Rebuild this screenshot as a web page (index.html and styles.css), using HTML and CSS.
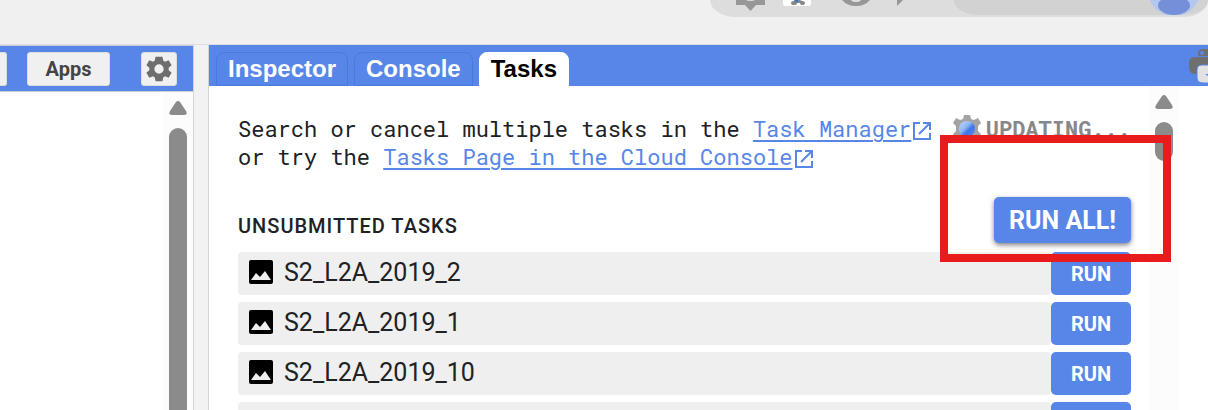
FILE: index.html
```
<!DOCTYPE html>
<html lang="en">
<head>
    <meta charset="UTF-8">
    <meta name="viewport" content="width=device-width, initial-scale=1.0">
    <title>Tasks</title>
    <link rel="stylesheet" href="styles.css">
</head>
<body>
    <header class="topbar">
        <div class="toolbar">
            <svg class="toolbar-icons" width="200" height="17" viewBox="0 0 200 17" aria-hidden="true">
                <path fill="#979797" d="M26 0h29v5h-9l-5.500 6l-5.500-6h-9z"/>
                <ellipse cx="40.500" cy="-1" rx="5" ry="2" fill="#ddd"/>
                <path fill="#fff" d="M73 0h28v3q0 3-3 3H76q-3 0-3-3z"/>
                <path fill="#888" d="M81 3q0-2 3-2l2-1h4l2 1q3 0 3 2t-3 2q-2 0-2-2h-3q0 2-3 2t-3-2z"/>
                <path fill="#3a78c4" d="M84 0h4v2h-3z"/>
                <path fill="#979797" d="M132 0q5 6 14 6t14-6h-9q-1 2-5 2t-5-2z"/>
                <path fill="#979797" d="M187 0h6l-6 6z"/>
            </svg>
            <div class="account">
                <svg width="48" height="15" viewBox="0 0 48 15" aria-hidden="true">
                    <path fill="#b3c7f0" d="M0 0h48a25 22 0 0 1-48 0z"/>
                    <path fill="#7590d8" d="M8 6q0-4 3-6h26q3 2 3 6c0 4-7 9-16 9S8 10 8 6z"/>
                </svg>
            </div>
        </div>
    </header>

    <main class="workspace">
        <section class="editor">
            <div class="editor-bar">
                <button class="button cut" aria-label="Reset"></button>
                <button class="button apps">Apps</button>
                <button class="button settings" aria-label="Settings">
                    <svg width="28" height="28" viewBox="0 0 24 24"><path fill="#6e6e6e" fill-rule="evenodd" d="M9 1.500h6l.6 3.300 1.600.9 3.100-1.200 2.500 4.300-2.500 2.200v2l2.500 2.200-2.500 4.300-3.100-1.200-1.600.9-.6 3.300H9l-.6-3.300-1.600-.9-3.100 1.200-2.500-4.300L3.700 13v-2L1.200 8.800l2.500-4.300 3.100 1.200 1.600-.9zM12 8a4 4 0 1 0 0 8 4 4 0 0 0 0-8z"/></svg>
                </button>
            </div>
            <div class="editor-body">
                <div class="scrollbar">
                    <svg width="18" height="14" viewBox="0 0 18 14" aria-hidden="true"><path fill="#8b8b8b" d="M7 1q2-2 4 0l6 9q2 4-2 4H3q-4 0-2-4z"/></svg>
                    <div class="thumb thumb-long"></div>
                </div>
            </div>
        </section>

        <div class="splitter"></div>

        <section class="panel">
            <nav class="tabs">
                <button class="tab">Inspector</button>
                <button class="tab">Console</button>
                <button class="tab active">Tasks</button>
                <svg class="python" width="19" height="34" viewBox="0 0 19 34" aria-hidden="true">
                    <path fill="#6f6f6f" d="M9 7V4q0-4 6-4h4v7z"/>
                    <path fill="#6f6f6f" d="M6 8h13v17H6q-6 0-6-7v-4q0-6 6-6z"/>
                    <circle cx="13" cy="4" r="2" fill="#5886e8"/>
                    <path fill="#e2e2e2" stroke="#5886e8" d="M8 21q0-5 5-5h7v18h-5q-7 0-7-5z"/>
                    <path fill="#5886e8" d="M16 25h3v2z"/>
                </svg>
            </nav>
            <div class="panel-body">
                <div class="tasks">
                    <div class="intro">
                        <p>Search or cancel multiple tasks in the <a href="#manager">Task Manager</a><svg class="open" width="18" height="18" viewBox="0 0 18 18" aria-hidden="true"><path fill="none" stroke="#5886e8" stroke-width="2" d="M7 1H1v16h16v-6M10 1h7v7M17 1L6 12"/></svg><br>or try the <a href="#cloud">Tasks Page in the Cloud Console</a><svg class="open" width="18" height="18" viewBox="0 0 18 18" aria-hidden="true"><path fill="none" stroke="#5886e8" stroke-width="2" d="M7 1H1v16h16v-6M10 1h7v7M17 1L6 12"/></svg></p>
                        <div class="updating">
                            <svg width="30" height="30" viewBox="0 0 30 30" aria-hidden="true">
                                <defs>
                                    <linearGradient id="ball" x1="0" y1="0" x2="1" y2="1">
                                        <stop offset="0" stop-color="#c4dafa"/>
                                        <stop offset="0.400" stop-color="#8fb6f5"/>
                                        <stop offset="0.600" stop-color="#3f74e4"/>
                                        <stop offset="1" stop-color="#5b93f0"/>
                                    </linearGradient>
                                </defs>
                                <path fill="#a3a3a3" d="M12 1h6l1 4 3 1 4-2 3 5-3 3v5l3 3-3 5-4-1-3 2-1 3h-6l-1-3-3-2-4 1-3-5 3-3v-5L1 9l3-5 4 2 3-1z"/>
                                <circle cx="15" cy="15" r="8" fill="url(#ball)"/>
                            </svg>
                            <span>UPDATING...</span>
                        </div>
                    </div>

                    <div class="heading">
                        <h2>UNSUBMITTED TASKS</h2>
                        <button class="run-all">RUN ALL!</button>
                    </div>

                    <ul class="task-list">
                        <li class="task">
                            <div class="name"><svg width="26" height="26" viewBox="0 0 26 26" aria-hidden="true"><rect x="1" y="1" width="24" height="24" rx="2"/><path fill="#efefef" d="M3 21l5-7 4 4 5-6 6 9z"/></svg>S2_L2A_2019_2</div>
                            <button class="run">RUN</button>
                        </li>
                        <li class="task">
                            <div class="name"><svg width="26" height="26" viewBox="0 0 26 26" aria-hidden="true"><rect x="1" y="1" width="24" height="24" rx="2"/><path fill="#efefef" d="M3 21l5-7 4 4 5-6 6 9z"/></svg>S2_L2A_2019_1</div>
                            <button class="run">RUN</button>
                        </li>
                        <li class="task">
                            <div class="name"><svg width="26" height="26" viewBox="0 0 26 26" aria-hidden="true"><rect x="1" y="1" width="24" height="24" rx="2"/><path fill="#efefef" d="M3 21l5-7 4 4 5-6 6 9z"/></svg>S2_L2A_2019_10</div>
                            <button class="run">RUN</button>
                        </li>
                        <li class="task">
                            <div class="name"></div>
                            <button class="run" aria-label="Run"></button>
                        </li>
                    </ul>
                    <div class="highlight"></div>
                </div>
                <div class="scrollbar">
                    <svg width="18" height="14" viewBox="0 0 18 14" aria-hidden="true"><path fill="#8b8b8b" d="M7 1q2-2 4 0l6 9q2 4-2 4H3q-4 0-2-4z"/></svg>
                    <div class="thumb"></div>
                </div>
            </div>
        </section>
    </main>
</body>
</html>
```
FILE: styles.css
```
* {
    box-sizing: border-box;
}
body {
    display: flex;
    flex-direction: column;
    margin: 0;
    height: 100vh;
    overflow: hidden;
    background: #fff;
    font-family: Roboto, sans-serif;
    color: #202124;
}
svg {
    display: block;
    flex: none;
}
button {
    border: none;
    padding: 0;
    font-family: inherit;
    font-weight: bold;
    cursor: pointer;
}

/* top strip */
.topbar {
    flex: none;
    display: flex;
    justify-content: flex-end;
    align-items: flex-start;
    height: 45px;
    background: #f0f0f0;
    border-bottom: 1px solid #dedede;
}
.toolbar {
    display: flex;
    justify-content: space-between;
    width: 498px;
    height: 17px;
    background: #ddd;
    border-radius: 0 0 24px 26px / 0 0 17px 17px;
}
.account {
    display: flex;
    justify-content: flex-end;
    width: 254px;
    height: 15px;
    padding-right: 10px;
    background: #d2d2d2;
    border-radius: 0 0 24px 24px / 0 0 15px 15px;
}

.workspace {
    flex: 1;
    display: flex;
    min-height: 0;
}

/* left pane */
.editor {
    flex: none;
    display: flex;
    flex-direction: column;
    width: 193px;
}
.editor-bar {
    flex: none;
    display: flex;
    align-items: center;
    height: 47px;
    background: #5886e8;
    border-top: 1px solid #c8d0e0;
    border-bottom: 1px solid #d0d0d0;
}
.button {
    height: 34px;
    background: #f0f0f0;
    border: 1px solid #ddd;
    border-radius: 3px;
    color: #444;
    font-size: 20px;
    font-weight: bold;
}
.cut {
    width: 7px;
    border-left: none;
    border-radius: 0 3px 3px 0;
}
.apps {
    width: 83px;
    margin-left: 20px;
}
.settings {
    display: flex;
    align-items: center;
    justify-content: center;
    width: 36px;
    margin-left: 31px;
}
.editor-body {
    flex: 1;
    display: flex;
    justify-content: flex-end;
}

.scrollbar {
    flex: none;
    display: flex;
    flex-direction: column;
    align-items: center;
    gap: 13px;
    width: 30px;
    padding-top: 9px;
    background: #fcfcfc;
}
.thumb {
    width: 18px;
    height: 39px;
    background: #8b8b8b;
    border-radius: 9px;
}
.thumb-long {
    flex: 1;
    border-radius: 9px 9px 0 0;
}

.splitter {
    flex: none;
    width: 16px;
    background: #f2f2f2;
    border-left: 1px solid #d4d4d4;
    border-right: 1px solid #d4d4d4;
}

/* right pane */
.panel {
    flex: 1;
    display: flex;
    flex-direction: column;
    min-width: 0;
}
.tabs {
    flex: none;
    display: flex;
    align-items: flex-end;
    gap: 6px;
    height: 41px;
    padding-left: 7px;
    background: #5886e8;
}
.tab {
    height: 34px;
    padding: 0 11px;
    background: #5886e8;
    border: 1px solid #4a78e2;
    border-radius: 8px 8px 0 0;
    color: #fff;
    font-family: "Liberation Sans", Arial, sans-serif;
    font-size: 24px;
}
.tab.active {
    background: #fff;
    border-color: #fff;
    color: #000;
}
.python {
    align-self: center;
    margin-left: auto;
}
.panel-body {
    flex: 1;
    display: flex;
    min-height: 0;
    padding-right: 29px;
    overflow: hidden;
}
.tasks {
    position: relative;
    flex: 1;
    min-width: 0;
    padding: 29px 18px 0 29px;
}
.intro {
    display: flex;
    justify-content: space-between;
    font-family: "Roboto Mono", "Liberation Mono", monospace;
    font-size: 22px;
    line-height: 28px;
    white-space: nowrap;
}
.intro p {
    margin: 0;
}
.intro a {
    color: #5886e8;
    text-decoration-thickness: 2px;
    text-underline-offset: 3px;
}
.open {
    display: inline-block;
    margin-left: 2px;
    vertical-align: -3px;
}
.updating {
    display: flex;
    align-items: center;
    gap: 4px;
    height: 28px;
    color: #878787;
    font-weight: bold;
}

.heading {
    display: flex;
    align-items: center;
    justify-content: space-between;
    margin-top: 26px;
}
.heading h2 {
    margin: 12px 0 0;
    font-size: 20px;
    font-weight: 500;
    letter-spacing: 1px;
}
.run-all {
    height: 46px;
    padding: 0 15px;
    background: #5886e8;
    border-radius: 5px;
    box-shadow: 0 2px 5px rgba(0, 0, 0, 0.5);
    color: #fff;
    font-size: 25px;
}
.task-list {
    display: flex;
    flex-direction: column;
    gap: 7px;
    margin: 9px 0 0;
    padding: 0;
    list-style: none;
}
.task {
    display: flex;
    height: 43px;
}
.name {
    flex: 1;
    display: flex;
    align-items: center;
    gap: 10px;
    padding: 0 0 3px 10px;
    background: #efefef;
    border-radius: 4px;
    font-size: 25px;
}
.run {
    width: 80px;
    background: #5886e8;
    border-radius: 5px;
    color: #fff;
    font-size: 20px;
}

/* red frame over the Run all button */
.highlight {
    position: absolute;
    top: 49px;
    right: -22px;
    width: 231px;
    height: 127px;
    border: 8px solid #e81c1c;
    pointer-events: none;
    z-index: 1;
}
```
